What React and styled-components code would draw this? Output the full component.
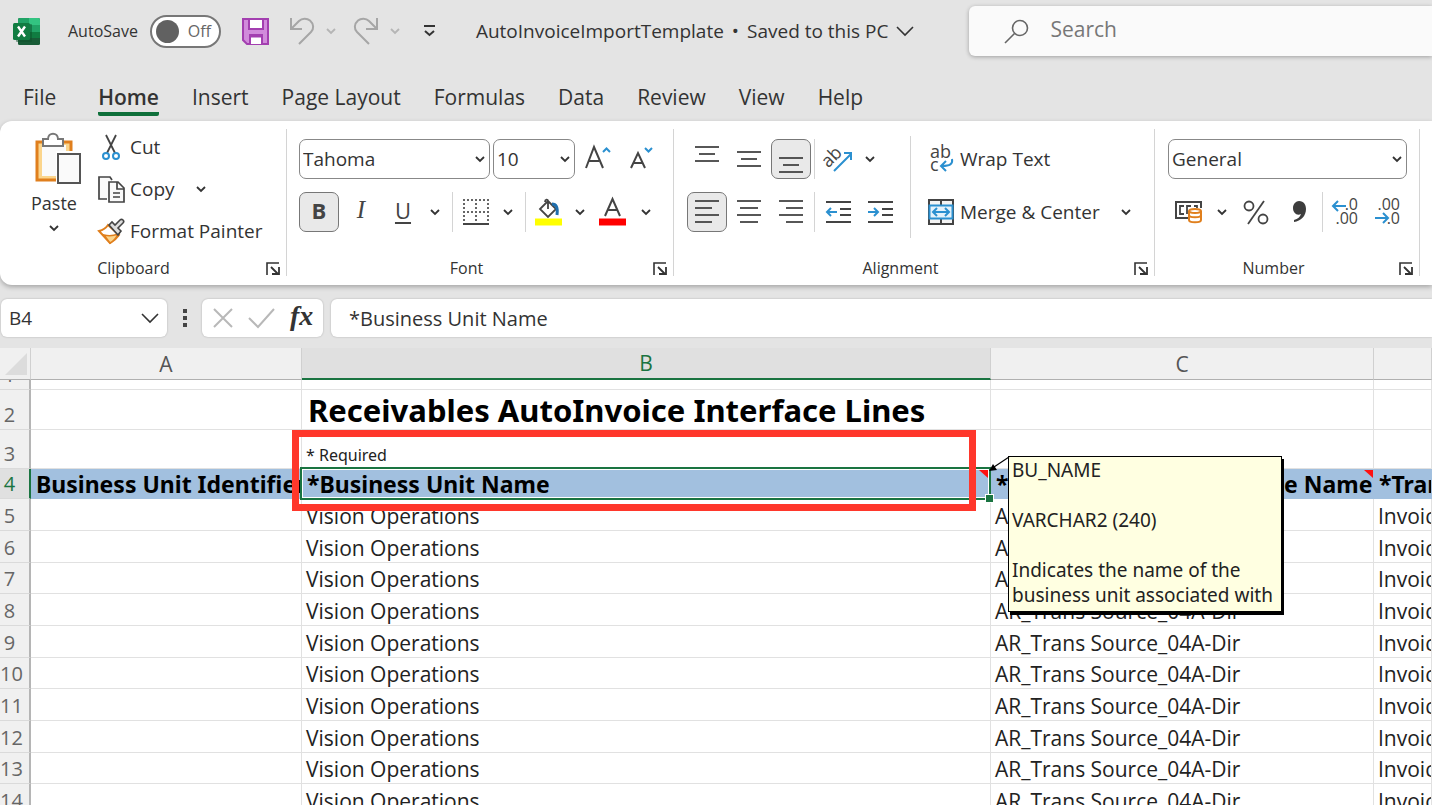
import React from "react";
import styled, { createGlobalStyle, css } from "styled-components";

const ui = `"Open Sans", "Noto Sans", sans-serif`;
const tahoma = `"Noto Sans", "DejaVu Sans Condensed", sans-serif`;
const ink = "#444";
const blue = "#2b90d0";
const green = "#1a7441";

const GlobalStyle = createGlobalStyle`
  *, *::before, *::after { box-sizing: border-box; }
  html, body { margin: 0; height: 100%; overflow: hidden; }
  body { background: #e4e4e4; font-family: ${ui}; color: #333; }
  button, input, select { font: inherit; color: inherit; margin: 0; }
`;

const Window = styled.div`
  display: flex;
  flex-direction: column;
  height: 100vh;
  overflow: hidden;
`;

/* ---------- title bar ---------- */

const TitleBar = styled.header`
  flex: none;
  display: flex;
  align-items: center;
  height: 62px;
  padding-left: 13px;
  font-size: 18px;
  white-space: nowrap;
  svg { flex: none; display: block; }
`;

const AutoSave = styled.label`
  display: flex;
  align-items: center;
  gap: 12px;
  margin: 0 21px 0 28px;
  font-size: 16px;
  line-height: 22px;
`;

const SwitchWrap = styled.span`
  position: relative;
  display: flex;
`;

const Switch = styled.input`
  appearance: none;
  width: 71px;
  height: 33px;
  border: 2px solid #777;
  border-radius: 17px;
  background: #fff;
  &::before {
    content: "";
    display: block;
    width: 23px;
    height: 23px;
    margin: 3px 4px;
    border-radius: 50%;
    background: #616161;
  }
`;

const SwitchText = styled.span`
  position: absolute;
  right: 10px;
  top: 5px;
  font-size: 16px;
  color: #666;
  pointer-events: none;
`;

const BarButton = styled.button`
  display: flex;
  align-items: center;
  gap: 11px;
  padding: 0;
  border: 0;
  background: none;
  margin-right: ${(p) => p.$after || 0}px;
`;

const DocTitle = styled.button`
  display: flex;
  align-items: center;
  gap: 8px;
  padding: 0;
  border: 0;
  background: none;
  font-size: 19px;
  line-height: 26px;
`;

const SearchBox = styled.label`
  flex: 1;
  align-self: flex-start;
  display: flex;
  align-items: center;
  gap: 21px;
  height: 50px;
  margin: 6px 0 0 55px;
  padding-left: 35px;
  min-width: 0;
  background: #fafafa;
  border-radius: 6px 0 0 6px;
  box-shadow: 0 1px 4px rgba(0, 0, 0, 0.3);
  input {
    flex: 1;
    min-width: 0;
    padding: 0 0 4px;
    border: 0;
    outline: 0;
    background: none;
    font-size: 21px;
  }
  input::placeholder { color: #777; opacity: 1; }
`;

/* ---------- tabs ---------- */

const Tabs = styled.nav`
  flex: none;
  display: flex;
  gap: 33px;
  height: 59px;
  padding: 20px 0 0 23px;
  font-size: 21px;
  line-height: 30px;
  white-space: nowrap;
`;

const Tab = styled.a`
  position: relative;
  height: 34px;
  color: #333;
  text-decoration: none;
  ${(p) =>
    p.$active &&
    css`
      margin-left: 9px;
      font-weight: 600;
      border-bottom: 4px solid #0f703b;
      border-radius: 2px;
    `}
`;

/* ---------- ribbon ---------- */

const Ribbon = styled.section`
  flex: none;
  position: relative;
  display: flex;
  height: 164px;
  background: #fff;
  border-radius: 12px 0 0 12px;
  box-shadow: 0 2px 5px rgba(0, 0, 0, 0.28);
`;

const Group = styled.div`
  flex: none;
  position: relative;
  display: flex;
  flex-direction: column;
  width: ${(p) => p.$width}px;
  padding-left: ${(p) => p.$pad || 0}px;
  &::after {
    content: "";
    position: absolute;
    right: 0;
    top: 8px;
    bottom: 9px;
    width: 1px;
    background: #d4d4d4;
  }
`;

const GroupBody = styled.div`
  flex: 1;
  display: flex;
  min-height: 0;
`;

const GroupFooter = styled.div`
  position: relative;
  height: 32px;
  margin-left: -${(p) => p.$pad || 0}px;
  padding-right: ${(p) => (p.$pad ? 28 : 20)}px;
  font-size: 16px;
  line-height: 30px;
  text-align: center;
`;

const Launcher = styled.button`
  position: absolute;
  right: 7px;
  top: 9px;
  padding: 0;
  border: 0;
  background: none;
  svg { display: block; }
`;

const Rows = styled.div`
  display: flex;
  flex-direction: column;
  gap: 13px;
  padding-top: 18px;
`;

const Row = styled.div`
  display: flex;
  align-items: center;
  gap: ${(p) => p.$gap || 0}px;
  height: 40px;
`;

const Commands = styled.div`
  display: flex;
  flex-direction: column;
  gap: 2px;
  padding-top: 6px;
`;

const ToolButton = styled.button`
  flex: none;
  display: flex;
  align-items: center;
  justify-content: center;
  width: 40px;
  height: 40px;
  margin-right: ${(p) => (p.$tight ? 0 : 2)}px;
  padding: 0;
  border: 1px solid ${(p) => (p.$on ? "#777" : "transparent")};
  border-radius: 7px;
  background: ${(p) => (p.$on ? "#e9e9e9" : "none")};
  color: ${ink};
`;

const DropButton = styled.button`
  flex: none;
  display: flex;
  align-items: center;
  justify-content: center;
  width: 24px;
  height: 24px;
  padding: 0;
  border: 0;
  background: none;
`;

const TextButton = styled.button`
  display: flex;
  align-items: center;
  gap: 6px;
  height: 40px;
  padding: 0;
  border: 0;
  background: none;
  font-size: 19px;
  line-height: 26px;
  white-space: nowrap;
`;

const IconSlot = styled.span`
  flex: none;
  display: flex;
  justify-content: center;
  width: 26px;
`;

const PasteButton = styled.button`
  display: flex;
  flex-direction: column;
  align-items: center;
  width: 64px;
  margin: 12px 12px 0 22px;
  padding: 0;
  border: 0;
  background: none;
  font-size: 18px;
  line-height: 26px;
  svg:first-child { margin: 0 0 6px 8px; }
  svg:last-child { margin-top: 9px; }
`;

const Rule = styled.span`
  flex: none;
  align-self: center;
  width: 1px;
  height: ${(p) => p.$height || 40}px;
  margin: 0 ${(p) => p.$after ?? 3}px 0 ${(p) => p.$before || 0}px;
  background: #d4d4d4;
`;

const SelectWrap = styled.label`
  position: relative;
  display: block;
  width: ${(p) => p.$width}px;
  height: 40px;
  select {
    appearance: none;
    width: 100%;
    height: 100%;
    padding: 0 26px 0 3px;
    border: 1px solid #888;
    border-radius: 7px;
    background: #fff;
    font-size: 19px;
  }
  svg {
    position: absolute;
    right: 5px;
    top: 17px;
    pointer-events: none;
  }
`;

const Glyph = styled.span`
  font-size: ${(p) => p.$size || 22}px;
  line-height: 24px;
  font-weight: ${(p) => (p.$bold ? 700 : 400)};
  font-style: ${(p) => (p.$italic ? "italic" : "normal")};
  font-family: ${(p) => (p.$serif ? `"Liberation Serif", serif` : ui)};
  padding-bottom: 4px;
  ${(p) => p.$line && "text-decoration: underline; text-underline-offset: 3px; text-decoration-thickness: 2px;"}
`;

/* ---------- formula bar ---------- */

const FormulaBar = styled.section`
  flex: none;
  display: flex;
  align-items: center;
  height: 63px;
  padding: 3px 0 0 1px;
  font-size: 20px;
`;

const BarBox = styled.div`
  display: flex;
  align-items: center;
  height: 38px;
  background: #fff;
  border-radius: 6px;
  box-shadow: 0 0 2px rgba(0, 0, 0, 0.25);
  button {
    display: flex;
    padding: 0;
    border: 0;
    background: none;
  }
  input {
    min-width: 0;
    flex: 1;
    padding: 0;
    border: 0;
    outline: 0;
    background: none;
  }
`;

const NameBox = styled(BarBox)`
  width: 166px;
  padding: 0 8px;
  font-size: 19px;
`;

const Actions = styled(BarBox)`
  width: 121px;
  gap: 15px;
  padding: 0 9px 0 11px;
`;

const FormulaBox = styled(BarBox)`
  flex: 1;
  margin-left: 8px;
  padding-left: 18px;
  border-radius: 6px 0 0 6px;
`;

const Dots = styled.span`
  display: flex;
  flex-direction: column;
  gap: 3px;
  margin: 0 15px 0 16px;
  i { width: 4px; height: 4px; background: #444; }
`;

/* ---------- worksheet ---------- */

const Sheet = styled.main`
  flex: 1;
  min-height: 0;
  overflow: hidden;
  background: #fff;
`;

const Grid = styled.table`
  width: 100%;
  table-layout: fixed;
  border-collapse: separate;
  border-spacing: 0;
  col:nth-child(1) { width: 31px; }
  col:nth-child(2) { width: 271px; }
  col:nth-child(3) { width: 689px; }
  col:nth-child(4) { width: 383px; }
`;

const ColHead = styled.th`
  height: 32px;
  padding: 0;
  font-size: 21px;
  font-weight: 400;
  line-height: 28px;
  color: ${(p) => (p.$on ? green : "#555")};
  background: ${(p) => (p.$on ? "#e0e0e0" : "#f0f0f0")};
  border-right: 1px solid #d0d0d0;
  border-bottom: ${(p) => (p.$on ? `2px solid ${green}` : "1px solid #b0b0b0")};
  svg { display: block; margin: 0 0 0 5px; }
`;

const Line = styled.tr`
  height: ${(p) => p.$height}px;
`;

const RowHead = styled.th`
  height: inherit;
  padding: 0 10px 0 0;
  overflow: hidden;
  vertical-align: bottom;
  font-size: 20px;
  font-weight: 400;
  line-height: 28px;
  color: ${(p) => (p.$on ? green : "#666")};
  background: ${(p) => (p.$on ? "#e0e0e0" : "#f0f0f0")};
  border-right: ${(p) => (p.$on ? `2px solid ${green}` : "2px solid #b5b5b5")};
  border-bottom: 1px solid #dadada;
`;

const Clip = styled.div`
  display: flex;
  align-items: flex-end;
  justify-content: center;
  height: 9px;
  overflow: hidden;
`;

const Cell = styled.td`
  position: relative;
  padding: 0 0 0 4px;
  overflow: ${(p) => (p.$open ? "visible" : "hidden")};
  vertical-align: bottom;
  font-size: 21px;
  line-height: 28px;
  white-space: nowrap;
  color: #222;
  border-right: 1px solid #e1e1e1;
  border-bottom: 1px solid #e1e1e1;
  ${(p) =>
    p.$kind === "title" &&
    css`
      padding-left: 6px;
      font: 700 31px/38px ${tahoma};
      color: #000;
    `}
  ${(p) =>
    p.$kind === "hint" &&
    css`
      font: 400 16px/26px ${tahoma};
    `}
  ${(p) =>
    p.$kind === "head" &&
    css`
      padding-left: 5px;
      font: 700 23px/28px ${tahoma};
      color: #000;
      background: #a2c0df;
      border-color: #a2c0df;
    `}
`;

const Flag = styled.span`
  position: absolute;
  top: 1px;
  right: ${(p) => p.$inset || 0}px;
  border-top: 8px solid #f11;
  border-left: 9px solid transparent;
`;

const Selection = styled.div`
  position: absolute;
  inset: -2px -1px -2px -2px;
  z-index: 1;
  border: 2px solid ${green};
  box-shadow: inset 0 0 0 1px #fff;
  &::after {
    content: "";
    position: absolute;
    right: -4px;
    bottom: -4px;
    width: 7px;
    height: 7px;
    background: ${green};
    outline: 1px solid #fff;
  }
`;

const Highlight = styled.div`
  position: absolute;
  z-index: 2;
  top: -39px;
  bottom: -13px;
  left: -10px;
  right: 14px;
  border: 7px solid #ff372b;
`;

const Note = styled.aside`
  position: absolute;
  z-index: 3;
  top: -13px;
  left: calc(100% + 18px);
  width: 274px;
  height: 156px;
  padding: 1px 3px;
  border: 1px solid #000;
  background: #ffffe1;
  box-shadow: 2px 3px 0 #000;
  font: 400 19px/25px ${tahoma};
  color: #222;
  white-space: pre-line;
  svg { position: absolute; top: -1px; left: -20px; }
  p { margin: 0; }
`;

/* ---------- icons ---------- */

const Svg = ({ w, h, children, ...rest }) => (
  <svg width={w} height={h} viewBox={`0 0 ${w} ${h}`} overflow="visible" fill="none" stroke={ink} strokeWidth="2" aria-hidden="true" {...rest}>
    {children}
  </svg>
);

const Chevron = ({ color = "#333" }) => (
  <Svg w={10} h={7} stroke={color}><path d="M1 1l4 4 4-4" strokeWidth="1.800" /></Svg>
);

const WideChevron = () => (
  <Svg w={18} h={12} stroke="#333"><path d="M1 2l8 8 8-8" strokeWidth="1.600" /></Svg>
);

const ExcelLogo = () => (
  <Svg w={27} h={27} stroke="none">
    <rect x="5" y="0" width="22" height="27" rx="1.500" fill="#185c37" />
    <path d="M5 1.500A1.500 1.500 0 0 1 6.500 0H16v7H5z" fill="#21a366" />
    <path d="M16 0h9.500A1.500 1.500 0 0 1 27 1.500V7H16z" fill="#33c481" />
    <path d="M5 7h11v7H5z" fill="#107c41" />
    <path d="M16 7h11v7H16z" fill="#21a366" />
    <path d="M16 14h11v6H16z" fill="#107c41" />
    <rect x="3" y="6" width="16" height="18" rx="1" fill="#0b4f2a" opacity=".5" />
    <rect x="0" y="5" width="17" height="17" rx="1.500" fill="#107c41" />
    <path d="M5 8.500l7 10M12 8.500l-7 10" stroke="#fff" strokeWidth="2.400" />
  </Svg>
);

const SaveIcon = () => (
  <Svg w={27} h={27} stroke="#a33fb0">
    <path d="M1 1h25v25H5l-4-4z" fill="#d18bdb" />
    <path d="M7 1h14v10H7z" fill="#fff" />
    <path d="M8 26V17h12v9" fill="#fff" />
    <path d="M8 18h12" strokeWidth="3" />
  </Svg>
);

const UndoIcon = ({ flip }) => (
  <Svg w={26} h={28} stroke="#a6a6a6" transform={flip ? "scale(-1 1)" : undefined}>
    <path d="M2 1v11h11M2 12l8-8C13 1 18 1 21 3.500c4 3.500 4 8.500 1 11.500L10 27" />
  </Svg>
);

const CustomizeIcon = () => (
  <Svg w={13} h={12} stroke="#333"><path d="M1 1h11M2 6l4.500 4L11 6" /></Svg>
);

const SearchIcon = () => (
  <Svg w={25} h={25} stroke="#666"><circle cx="16" cy="9" r="7.500" strokeWidth="1.600" /><path d="M10.500 14.500L1 24" strokeWidth="1.600" /></Svg>
);

const LaunchIcon = () => (
  <Svg w={14} h={13} stroke="#333"><path d="M1 13V1h12" strokeWidth="1.600" /><path d="M5 5l7 7M13 5v7H6" strokeWidth="1.800" /></Svg>
);

const PasteIcon = () => (
  <Svg w={46} h={51}>
    <rect x="2" y="9" width="34" height="38" fill="#fbd58c" stroke="#e07f1d" strokeWidth="3" />
    <path d="M7 12h24v31H7z" fill="#fafafa" stroke="none" />
    <path d="M21 18h25v33H21z" fill="#fff" stroke="none" />
    <path d="M8 6h5c0-7 10-7 10 0h5v7H8z" fill="#fff" stroke="#777" />
    <rect x="23" y="21" width="22" height="29" fill="#fafafa" stroke="#555" />
  </Svg>
);

const CutIcon = () => (
  <Svg w={18} h={27}>
    <path d="M4 1l9 18M14 1L5 19" strokeWidth="1.800" />
    <circle cx="4" cy="22" r="3" stroke={blue} /><circle cx="14" cy="22" r="3" stroke={blue} />
  </Svg>
);

const CopyIcon = () => (
  <Svg w={27} h={27}>
    <path d="M9 23H1V1h11l2 3" fill="#fafafa" strokeWidth="1.700" />
    <path d="M11 6h9l6 6v14H11z" fill="#fafafa" strokeWidth="1.700" />
    <path d="M19 6v7h7M15 17h7M15 21h7" strokeWidth="1.700" />
  </Svg>
);

const PainterIcon = () => (
  <Svg w={27} h={26}>
    <path d="M1 13c4-1 7-3 9-6l11 10c-2 3-5 6-9 8z" fill="#fff" stroke="#e07f1d" />
    <path d="M6 17c4 1 9 1 14-1-2 4-4 7-8 9z" fill="#fbd58c" stroke="#e07f1d" strokeWidth="1.400" />
    <path d="M11 7l3-3 3 3 5-5c2-2 5 1 3 3l-5 5 3 3-3 4z" fill="#ddd" strokeWidth="1.600" />
  </Svg>
);

const FontSizeIcon = ({ down }) => (
  <Svg w={27} h={27}>
    {down ? <path d="M1 22L8 7l7 15M4 17h8" /> : <path d="M1 22L9 1l9 21M4 15h10" />}
    {down ? <path d="M15 2l3.500 3.500L22 2" stroke={blue} /> : <path d="M18 6l3.500-3.500L25 6" stroke={blue} />}
  </Svg>
);

const BordersIcon = () => (
  <Svg w={26} h={26} stroke="#666" shapeRendering="crispEdges">
    <path d="M0 1h26M0 13h26M1 0v24M13 0v24M25 0v24" strokeDasharray="2 2" />
    <path d="M0 25h26" stroke={ink} />
  </Svg>
);

const FillIcon = () => (
  <Svg w={27} h={28}>
    <path d="M13 11V3c0-2-3-2-3 1M13 3l8 8-8 8-8-8 8-8" strokeWidth="1.800" />
    <path d="M17 6c4 0 6 3 5 11" stroke="#1f6fae" strokeWidth="3" />
    <path d="M0 24h27" stroke="#ff0" strokeWidth="7" />
  </Svg>
);

const FontColorIcon = () => (
  <Svg w={27} h={28}>
    <path d="M6 18L13.500 1 21 18M9 12h9" />
    <path d="M0 24h27" stroke="#f00" strokeWidth="7" />
  </Svg>
);

/* Each entry is [start, end] of a horizontal stroke. */
const LinesIcon = ({ rows, step, top = 1 }) => (
  <Svg w={24} h={26}>
    {rows.map(([a, b], i) => <path key={i} d={`M${a} ${top + i * step}H${b}`} strokeWidth="1.800" />)}
  </Svg>
);

const IndentIcon = ({ right }) => (
  <Svg w={25} h={24}>
    <path d="M0 2h25M14 9h11M14 15h11M0 22h25" strokeWidth="1.800" />
    <path d={right ? "M0 12h10M6 8l4 4-4 4" : "M11 12H1M5 8l-4 4 4 4"} stroke={blue} />
  </Svg>
);

const OrientIcon = () => (
  <Svg w={28} h={28}>
    <text x="-1" y="19" transform="rotate(-45 7 15)" fill={ink} stroke="none" fontFamily="Open Sans" fontSize="18">ab</text>
    <path d="M10 26L27 9M20 8h7v7" stroke={blue} />
  </Svg>
);

const WrapIcon = () => (
  <Svg w={24} h={28}>
    <text x="1" y="13" fill={ink} stroke="none" fontFamily="Open Sans" fontSize="18">ab</text>
    <text x="1" y="26" fill={ink} stroke="none" fontFamily="Open Sans" fontSize="18">c</text>
    <path d="M23 14c1 5-2 7-10 7M17 16l-5 5 5 5" stroke={blue} />
  </Svg>
);

const MergeIcon = () => (
  <Svg w={26} h={26}>
    <path d="M1 1h24v24H1zM13 1v5M13 20v5" fill="#f4f4f4" />
    <path d="M1.500 6.500h23v13h-23z" fill="#e5f2fb" stroke={blue} />
    <path d="M5 13h16M9 9l-4 4 4 4M17 9l4 4-4 4" stroke={blue} />
  </Svg>
);

const CurrencyIcon = () => (
  <Svg w={27} h={22}>
    <path d="M13 17H1V1h25v6" fill="none" />
    <path d="M9 5H5v8h4M16 5h-4v8M19 5h3v2" strokeWidth="1.800" />
    <path d="M14 10v9c0 3 12 3 12 0v-9" fill="#fff" stroke="#e07f1d" />
    <ellipse cx="20" cy="10" rx="6" ry="2" fill="#fff" stroke="#e07f1d" />
    <path d="M14 14c0 3 12 3 12 0" stroke="#e07f1d" />
  </Svg>
);

const PercentIcon = () => (
  <Svg w={26} h={25} strokeWidth="1.800"><circle cx="6" cy="6" r="4.500" /><circle cx="20" cy="19" r="4.500" /><path d="M21 1L5 24" /></Svg>
);

const CommaIcon = () => (
  <Svg w={14} h={22} stroke="none">
    <path d="M6 0c5 0 7 4 7 8 0 7-5 12-12 13v-2c4-1 6-3 7-6-4 2-8-1-8-6 0-4 3-7 6-7z" fill="#3d3d3d" />
  </Svg>
);

const DecimalIcon = ({ less }) => (
  <Svg w={27} h={28}>
    <g fill={ink} stroke="none" fontFamily="Open Sans" fontSize="16" textAnchor="end">
      <text x="26" y="12">{less ? ".00" : ".0"}</text>
      <text x="26" y="26">{less ? ".0" : ".00"}</text>
    </g>
    {less
      ? <path d="M1 20h13M9 15l5 5-5 5" stroke={blue} />
      : <path d="M14 8H1M6 3L1 8l5 5" stroke={blue} />}
  </Svg>
);

/* ---------- data ---------- */

const tabs = ["File", "Home", "Insert", "Page Layout", "Formulas", "Data", "Review", "View", "Help"];

const noteText = `BU_NAME

VARCHAR2 (240)

Indicates the name of the
business unit associated with`;

const dataRows = [5, 6, 7, 8, 9, 10, 11, 12, 13, 14];

const Footer = ({ label, pad }) => (
  <GroupFooter $pad={pad}>
    {label}
    <Launcher type="button" aria-label={`${label} settings`}><LaunchIcon /></Launcher>
  </GroupFooter>
);

const Picker = ({ label, value, width }) => (
  <SelectWrap $width={width}>
    <select aria-label={label} defaultValue={value}><option>{value}</option></select>
    <Chevron />
  </SelectWrap>
);

const Tool = ({ label, children, ...rest }) => (
  <ToolButton type="button" aria-label={label} {...rest}>{children}</ToolButton>
);

const Drop = ({ label }) => (
  <DropButton type="button" aria-label={label}><Chevron /></DropButton>
);

export default function App() {
  return (
    <Window>
      <GlobalStyle />
      <TitleBar>
        <ExcelLogo />
        <AutoSave>
          AutoSave
          <SwitchWrap>
            <Switch type="checkbox" role="switch" />
            <SwitchText>Off</SwitchText>
          </SwitchWrap>
        </AutoSave>
        <BarButton type="button" aria-label="Save" $after={20}><SaveIcon /></BarButton>
        <BarButton type="button" aria-label="Undo" $after={17}><UndoIcon /><Chevron color="#b5b5b5" /></BarButton>
        <BarButton type="button" aria-label="Redo" $after={23}><UndoIcon flip /><Chevron color="#b5b5b5" /></BarButton>
        <BarButton type="button" aria-label="Customize toolbar" $after={40}><CustomizeIcon /></BarButton>
        <DocTitle type="button">
          <span>AutoInvoiceImportTemplate</span>
          <span>•</span>
          <span>Saved to this PC</span>
          <WideChevron />
        </DocTitle>
        <SearchBox>
          <SearchIcon />
          <input type="search" placeholder="Search" aria-label="Search" />
        </SearchBox>
      </TitleBar>

      <Tabs>
        {tabs.map((t) => <Tab key={t} href="#" $active={t === "Home"}>{t}</Tab>)}
      </Tabs>

      <Ribbon>
        <Group $width={287}>
          <GroupBody>
            <PasteButton type="button"><PasteIcon />Paste<Chevron /></PasteButton>
            <Commands>
              <Row>
                <TextButton type="button"><IconSlot><CutIcon /></IconSlot>Cut</TextButton>
              </Row>
              <Row $gap={14}>
                <TextButton type="button"><IconSlot><CopyIcon /></IconSlot>Copy</TextButton>
                <Drop label="Copy options" />
              </Row>
              <Row>
                <TextButton type="button"><IconSlot><PainterIcon /></IconSlot>Format Painter</TextButton>
              </Row>
            </Commands>
          </GroupBody>
          <Footer label="Clipboard" />
        </Group>

        <Group $width={387} $pad={12}>
          <GroupBody>
            <Rows>
              <Row $gap={3}>
                <Picker label="Font" value="Tahoma" width={191} />
                <Picker label="Font size" value="10" width={82} />
                <Tool label="Increase font size"><FontSizeIcon /></Tool>
                <Tool label="Decrease font size"><FontSizeIcon down /></Tool>
              </Row>
              <Row>
                <Tool label="Bold" $on><Glyph $bold>B</Glyph></Tool>
                <Tool label="Italic"><Glyph $italic $serif $size={25}>I</Glyph></Tool>
                <Tool label="Underline" $tight><Glyph $line>U</Glyph></Tool>
                <Drop label="Underline options" />
                <Rule $before={5} />
                <Tool label="Borders" $tight><BordersIcon /></Tool>
                <Drop label="Border options" />
                <Rule $before={5} $after={2} />
                <Tool label="Fill color" $tight><FillIcon /></Tool>
                <Drop label="Fill options" />
                <Tool label="Font color"><FontColorIcon /></Tool>
                <Drop label="Font color options" />
              </Row>
            </Rows>
          </GroupBody>
          <Footer label="Font" pad={12} />
        </Group>

        <Group $width={481} $pad={13}>
          <GroupBody>
            <Rows>
              <Row>
                <Tool label="Top align"><LinesIcon rows={[[0, 24], [4, 20], [0, 24]]} step={7} top={1} /></Tool>
                <Tool label="Middle align"><LinesIcon rows={[[0, 24], [4, 20], [0, 24]]} step={7} top={6} /></Tool>
                <Tool label="Bottom align" $on><LinesIcon rows={[[0, 24], [4, 20], [0, 24]]} step={7} top={12} /></Tool>
                <Rule $before={1} />
                <Tool label="Orientation" $tight><OrientIcon /></Tool>
                <Drop label="Orientation options" />
              </Row>
              <Row>
                <Tool label="Align left" $on><LinesIcon rows={[[0, 24], [0, 17], [0, 24], [0, 17]]} step={7} top={2} /></Tool>
                <Tool label="Center"><LinesIcon rows={[[0, 24], [3, 21], [0, 24], [3, 21]]} step={7} top={2} /></Tool>
                <Tool label="Align right"><LinesIcon rows={[[0, 24], [7, 24], [0, 24], [7, 24]]} step={7} top={2} /></Tool>
                <Rule $before={1} />
                <Tool label="Decrease indent"><IndentIcon /></Tool>
                <Tool label="Increase indent"><IndentIcon right /></Tool>
              </Row>
            </Rows>
            <Rule $height={102} $before={8} $after={17} />
            <Rows>
              <Row>
                <TextButton type="button"><IconSlot><WrapIcon /></IconSlot>Wrap Text</TextButton>
              </Row>
              <Row $gap={14}>
                <TextButton type="button"><IconSlot><MergeIcon /></IconSlot>Merge &amp; Center</TextButton>
                <Drop label="Merge options" />
              </Row>
            </Rows>
          </GroupBody>
          <Footer label="Alignment" pad={13} />
        </Group>

        <Group $width={265} $pad={13}>
          <GroupBody>
            <Rows>
              <Row>
                <Picker label="Number format" value="General" width={239} />
              </Row>
              <Row $gap={2}>
                <Tool label="Accounting format" $tight><CurrencyIcon /></Tool>
                <Drop label="Accounting options" />
                <Tool label="Percent style"><PercentIcon /></Tool>
                <Tool label="Comma style" $tight><CommaIcon /></Tool>
                <Rule $after={0} />
                <Tool label="Increase decimal" $tight><DecimalIcon /></Tool>
                <Tool label="Decrease decimal" $tight><DecimalIcon less /></Tool>
              </Row>
            </Rows>
          </GroupBody>
          <Footer label="Number" pad={13} />
        </Group>
      </Ribbon>

      <FormulaBar>
        <NameBox>
          <input aria-label="Name box" defaultValue="B4" />
          <button type="button" aria-label="Named ranges"><WideChevron /></button>
        </NameBox>
        <Dots><i /><i /><i /></Dots>
        <Actions>
          <button type="button" aria-label="Cancel"><Svg w={20} h={20} stroke="#b8b8b8"><path d="M1 1l18 18M19 1L1 19" /></Svg></button>
          <button type="button" aria-label="Enter"><Svg w={27} h={20} stroke="#b8b8b8"><path d="M1 10l9 9L26 1" /></Svg></button>
          <button type="button" aria-label="Insert function"><Glyph $italic $serif $bold $size={28}>fx</Glyph></button>
        </Actions>
        <FormulaBox>
          <input aria-label="Formula" defaultValue="*Business Unit Name" />
        </FormulaBox>
      </FormulaBar>

      <Sheet>
        <Grid>
          <colgroup><col /><col /><col /><col /><col /></colgroup>
          <thead>
            <tr>
              <ColHead aria-label="Select all"><Svg w={22} h={22} stroke="none"><path d="M22 0v22H0z" fill="#dcdcdc" /></Svg></ColHead>
              <ColHead>A</ColHead>
              <ColHead $on>B</ColHead>
              <ColHead>C</ColHead>
              <ColHead />
            </tr>
          </thead>
          <tbody>
            <Line $height={10}>
              <RowHead><Clip>1</Clip></RowHead><Cell /><Cell /><Cell /><Cell />
            </Line>
            <Line $height={40}>
              <RowHead>2</RowHead><Cell /><Cell $kind="title">Receivables AutoInvoice Interface Lines</Cell><Cell /><Cell />
            </Line>
            <Line $height={39}>
              <RowHead>3</RowHead><Cell /><Cell $kind="hint">* Required</Cell><Cell /><Cell />
            </Line>
            <Line $height={30}>
              <RowHead $on>4</RowHead>
              <Cell $kind="head">Business Unit Identifier</Cell>
              <Cell $kind="head" $open>
                *Business Unit Name
                <Flag $inset={2} />
                <Selection />
                <Highlight />
                <Note>
                  <Svg w={20} h={17} stroke="#000"><path d="M20 1L5 11" strokeWidth="1.200" /><path d="M0 15l4-7 4 6z" fill="#000" stroke="none" /></Svg>
                  <p>{noteText}</p>
                </Note>
              </Cell>
              <Cell $kind="head">*Transaction Batch Source Name<Flag /></Cell>
              <Cell $kind="head">*Transaction Type Name</Cell>
            </Line>
            {dataRows.map((n, i) => (
              <Line key={n} $height={i % 3 === 2 ? 31 : 32}>
                <RowHead>{n}</RowHead>
                <Cell />
                <Cell>Vision Operations</Cell>
                <Cell>AR_Trans Source_04A-Dir</Cell>
                <Cell>Invoice</Cell>
              </Line>
            ))}
          </tbody>
        </Grid>
      </Sheet>
    </Window>
  );
}
